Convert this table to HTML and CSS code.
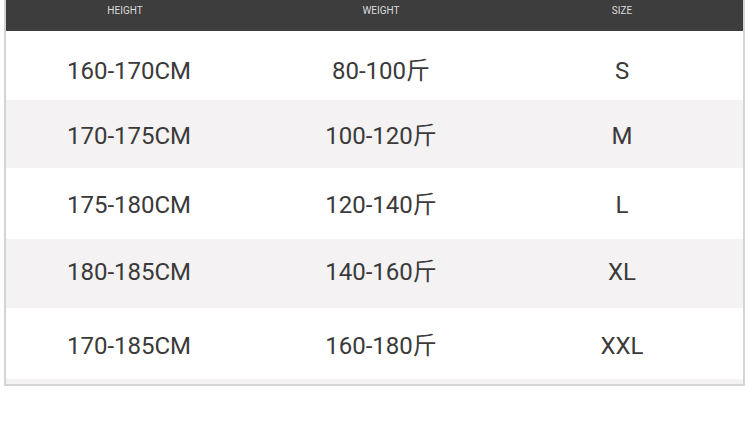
FILE: index.html
```html
<!DOCTYPE html>
<html lang="zh">
<head>
<meta charset="utf-8">
<title>Size chart</title>
<link rel="stylesheet" href="styles.css">
</head>
<body>
<div class="chart">
  <div class="row head">
    <div class="cell">HEIGHT</div>
    <div class="cell">WEIGHT</div>
    <div class="cell">SIZE</div>
  </div>
  <div class="row r1">
    <div class="cell">160-170CM</div>
    <div class="cell">80-100斤</div>
    <div class="cell">S</div>
  </div>
  <div class="row alt r2">
    <div class="cell">170-175CM</div>
    <div class="cell">100-120斤</div>
    <div class="cell">M</div>
  </div>
  <div class="row r3">
    <div class="cell">175-180CM</div>
    <div class="cell">120-140斤</div>
    <div class="cell">L</div>
  </div>
  <div class="row alt r4">
    <div class="cell">180-185CM</div>
    <div class="cell">140-160斤</div>
    <div class="cell">XL</div>
  </div>
  <div class="row r5">
    <div class="cell">170-185CM</div>
    <div class="cell">160-180斤</div>
    <div class="cell">XXL</div>
  </div>
  <div class="foot"></div>
</div>
</body>
</html>
```

FILE: styles.css
```css
html, body {
  margin: 0;
  padding: 0;
  background: #ffffff;
}

body {
  padding: 0 5px 0 4px;
  font-family: Roboto, "Noto Sans CJK SC", sans-serif;
}

.chart {
  width: 737px;
  border: 2px solid #d4d4d4;
  border-top: none;
}

.row {
  display: grid;
  grid-template-columns: 246px 258px 1fr;
  box-sizing: border-box;
  color: #3a3a3a;
  font-size: 24px;
  line-height: 24px;
}

.cell {
  text-align: center;
  white-space: nowrap;
}

.cell:last-child {
  padding-right: 9px;
}

.head {
  height: 31px;
  background: #3d3d3d;
  color: #dcdcdc;
  font-size: 10px;
  line-height: 10px;
  padding-top: 6px;
}

.head .cell:first-child {
  padding-right: 8px;
}

.alt {
  background: #f4f2f2;
}

.r1 { height: 69px; padding-top: 28px; }
.r2 { height: 68px; padding-top: 24px; }
.r3 { height: 71px; padding-top: 25px; }
.r4 { height: 69px; padding-top: 21px; }
.r5 { height: 71px; padding-top: 26px; }

.foot {
  height: 5px;
  background: #f4f2f2;
}
```
